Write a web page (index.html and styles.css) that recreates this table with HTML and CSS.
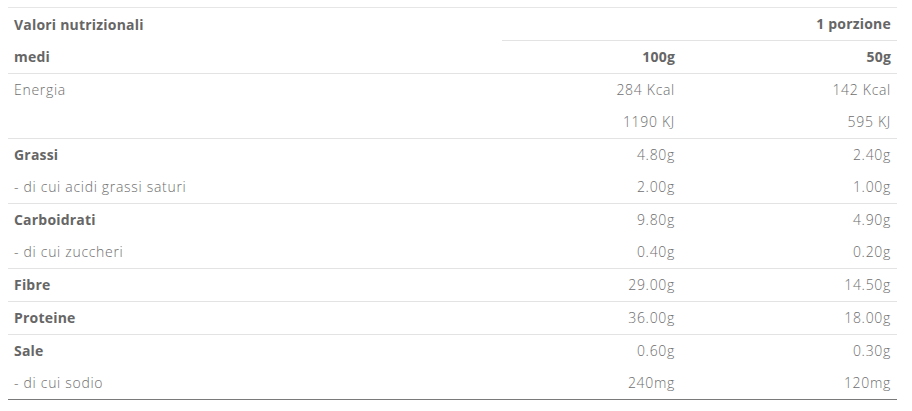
FILE: index.html
```html
<!DOCTYPE html>
<html lang="it">
<head>
<meta charset="utf-8">
<title>Valori nutrizionali</title>
<link rel="stylesheet" href="styles.css">
</head>
<body>
<table class="nutri">
  <colgroup>
    <col class="c-label">
    <col class="c-100">
    <col class="c-portion">
  </colgroup>
  <thead>
    <tr class="h1">
      <th class="label head-label" rowspan="2">Valori nutrizionali<br>medi</th>
      <th class="num"></th>
      <th class="num">1 porzione</th>
    </tr>
    <tr class="h2">
      <th class="num">100g</th>
      <th class="num">50g</th>
    </tr>
  </thead>
  <tbody class="grp">
    <tr><td class="label">Energia</td><td class="num">284 Kcal</td><td class="num">142 Kcal</td></tr>
    <tr><td class="label"></td><td class="num">1190 KJ</td><td class="num">595 KJ</td></tr>
  </tbody>
  <tbody class="grp">
    <tr><td class="label strong">Grassi</td><td class="num">4.80g</td><td class="num">2.40g</td></tr>
    <tr><td class="label">- di cui acidi grassi saturi</td><td class="num">2.00g</td><td class="num">1.00g</td></tr>
  </tbody>
  <tbody class="grp">
    <tr><td class="label strong">Carboidrati</td><td class="num">9.80g</td><td class="num">4.90g</td></tr>
    <tr><td class="label">- di cui zuccheri</td><td class="num">0.40g</td><td class="num">0.20g</td></tr>
  </tbody>
  <tbody class="grp">
    <tr><td class="label strong">Fibre</td><td class="num">29.00g</td><td class="num">14.50g</td></tr>
  </tbody>
  <tbody class="grp">
    <tr><td class="label strong">Proteine</td><td class="num">36.00g</td><td class="num">18.00g</td></tr>
  </tbody>
  <tbody class="grp last">
    <tr><td class="label strong">Sale</td><td class="num">0.60g</td><td class="num">0.30g</td></tr>
    <tr><td class="label">- di cui sodio</td><td class="num">240mg</td><td class="num">120mg</td></tr>
  </tbody>
</table>
</body>
</html>
```

FILE: styles.css
```css
html, body {
  margin: 0;
  padding: 0;
  background: #ffffff;
}

body {
  font-family: "Open Sans", "Liberation Sans", sans-serif;
  font-size: 14px;
  color: #6e6e6e;
}

.nutri {
  margin: 7px 0 0 8px;
  width: 889px;
  border-collapse: collapse;
  table-layout: fixed;
  border-top: 1px solid #e6e6e6;
}

.c-label { width: 494px; }
.c-100 { width: 179px; }
.c-portion { width: 216px; }

.nutri th,
.nutri td {
  height: 32px;
  padding: 0 6px;
  vertical-align: middle;
  line-height: 20px;
  font-weight: 300;
  letter-spacing: 0.7px;
  white-space: nowrap;
}

.nutri th {
  font-weight: 700;
  letter-spacing: 0.2px;
  color: #666666;
}

.nutri .head-label {
  line-height: 32px;
  text-align: left;
  border-bottom: 1px solid #e3e3e3;
}

.nutri .h1 .num {
  border-bottom: 1px solid #e3e3e3;
}

.nutri .h2 th {
  border-bottom: 1px solid #e3e3e3;
}

.label {
  text-align: left;
}

.num {
  text-align: right;
}

.nutri .strong {
  font-weight: 700;
  letter-spacing: 0.2px;
  color: #666666;
}

.grp {
  border-bottom: 1px solid #e3e3e3;
}

.grp.last {
  border-bottom: 1px solid #7a7a7a;
}
```
